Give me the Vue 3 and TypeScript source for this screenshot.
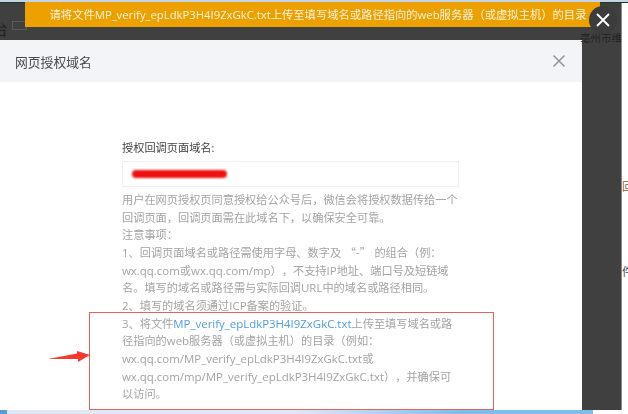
<script setup lang="ts">
const fileName = 'MP_verify_epLdkP3H4I9ZxGkC.txt'
</script>

<template>
  <div class="page">
    <div class="backdrop">
      <section class="modal">
        <header class="modal-head">
          <h2 class="modal-title">网页授权域名</h2>
          <svg class="modal-x" width="14" height="14" viewBox="0 0 14 14">
            <path d="M1.5 1.5 12.5 12.5M12.5 1.5 1.5 12.5" stroke="#8c8c8c" stroke-width="1.4" fill="none" />
          </svg>
        </header>
        <div class="modal-body">
          <div class="label">授权回调页面域名:</div>
          <div class="input"><span class="redact"></span></div>
          <div class="help">
            <div>用户在网页授权页同意授权给公众号后，微信会将授权数据传给一个</div>
            <div>回调页面，回调页面需在此域名下，以确保安全可靠。</div>
            <div>注意事项：</div>
            <div><span class="lat">1</span>、回调页面域名或路径需使用字母、数字及<span class="cjk">“-”</span>的组合（例：</div>
            <div><span class="lat">wx.qq.com</span>或<span class="lat">wx.qq.com/mp</span>），不支持<span class="lat">IP</span>地址、端口号及短链域</div>
            <div>名。填写的域名或路径需与实际回调<span class="lat">URL</span>中的域名或路径相同。</div>
            <div><span class="lat">2</span>、填写的域名须通过<span class="lat">ICP</span>备案的验证。</div>
            <div><span class="lat">3</span>、将文件<span class="lat link">{{ fileName }}</span>上传至填写域名或路</div>
            <div>径指向的<span class="lat">web</span>服务器（或虚拟主机）的目录（例如：</div>
            <div><span class="lat">wx.qq.com/{{ fileName }}</span>或</div>
            <div><span class="lat">wx.qq.com/mp/{{ fileName }}</span>），并确保可</div>
            <div>以访问。</div>
          </div>
        </div>
      </section>
      <div class="strip-text">亳州市维</div>
    </div>

    <div class="taskbar"></div>
    <div class="top-edge"></div>
    <div class="under-text">台</div>
    <div class="under-box"></div>
    <div class="edge-a">回</div>
    <div class="edge-b">件</div>

    <div class="toast">请将文件{{ fileName }}上传至填写域名或路径指向的web服务器（或虚拟主机）的目录</div>
    <button class="toast-close" type="button" aria-label="关闭">
      <svg width="14" height="14" viewBox="0 0 14 14">
        <path d="M1 1 13 13M13 1 1 13" stroke="#fff" stroke-width="1.8" fill="none" />
      </svg>
    </button>

    <div class="mark-box"></div>
    <svg class="mark-arrow" width="46" height="16" viewBox="0 0 46 16">
      <path d="M2 11 31 5.5 31 3 44 7 32 14 32 11Z" fill="#f5392f" />
    </svg>
  </div>
</template>

<style>
html, body { margin: 0; background: #fff; }
</style>

<style scoped>
.page {
  position: relative;
  width: 628px;
  height: 414px;
  overflow: hidden;
  background: #fff;
  font-family: "Open Sans", "Noto Sans CJK SC", sans-serif;
  text-spacing-trim: space-all;
}
.backdrop {
  position: relative;
  width: 622px;
  height: 410px;
  padding-top: 40px;
  box-sizing: border-box;
  background: #404040;
  border-right: 1px solid #8a8a8a;
}
.modal {
  width: 582px;
  height: 370px;
  background: #fff;
  filter: blur(0.35px);
}
.modal-head {
  height: 42px;
  display: flex;
  align-items: center;
  justify-content: space-between;
  padding: 0 16px 0 15px;
  background: #f2f4f8;
}
.modal-title {
  margin: 0;
  font-size: 12.8px;
  font-weight: 400;
  color: #4a4a4a;
}
.modal-x { display: block; }
.modal-body { padding: 56px 0 0 122px; }
.label {
  height: 20px;
  line-height: 20px;
  font-size: 11.2px;
  color: #444;
}
.input {
  width: 337px;
  height: 26px;
  box-sizing: border-box;
  margin-top: 3px;
  padding: 8px 0 0 9px;
  border: 1px solid #efefef;
}
.redact {
  display: block;
  width: 95px;
  height: 8px;
  border-radius: 4px;
  background: #ee1111;
  filter: blur(1px);
}
.help {
  margin-top: 4px;
  font-size: 11.2px;
  line-height: 17.65px;
  color: #a3a3a3;
  white-space: nowrap;
}
.lat { font-size: 11.45px; }
.cjk { font-family: "Noto Sans CJK SC", sans-serif; padding: 0 3.5px; }
.link { color: #4f9fd8; }
.strip-text {
  position: absolute;
  left: 580px;
  top: 32px;
  font-size: 10.5px;
  line-height: 12px;
  color: #222;
  white-space: nowrap;
  overflow: hidden;
  width: 41px;
}
.taskbar {
  position: absolute;
  left: 0;
  bottom: 0;
  width: 593px;
  height: 4px;
  background: linear-gradient(90deg, #5b9bd5 0, #5b9bd5 7px, #dfe8f4 7px, #dfe8f4 50%, #7ebcea 78%, #7ebcea 100%);
}
.top-edge {
  position: absolute;
  left: 0;
  top: 0;
  width: 628px;
  height: 3px;
  background: linear-gradient(180deg, #c5d5e5 0 2px, #1d3a22 2px);
}
.under-text {
  position: absolute;
  left: -8px;
  top: 20px;
  font-size: 16px;
  line-height: 19px;
  color: #222;
}
.under-box {
  position: absolute;
  left: 12px;
  top: 21px;
  width: 13px;
  height: 7px;
  border: 1px solid #5a5a5a;
}
.edge-a, .edge-b {
  position: absolute;
  left: 622px;
  font-size: 11px;
  line-height: 12px;
  color: #8a5a3a;
}
.edge-a { top: 181px; }
.edge-b { top: 266px; color: #445; }
.toast {
  position: absolute;
  left: 25px;
  top: 2px;
  width: 575px;
  height: 25px;
  box-sizing: border-box;
  padding-left: 11px;
  line-height: 25px;
  text-align: center;
  font-size: 11.3px;
  color: #fdf3dc;
  background: #eda100;
  white-space: nowrap;
  filter: blur(0.3px);
}
.toast-close {
  position: absolute;
  left: 589px;
  top: 6px;
  width: 28px;
  height: 28px;
  display: flex;
  align-items: center;
  justify-content: center;
  padding: 0;
  border: 0;
  border-radius: 50%;
  background: #3c3c3c;
}
.mark-box {
  position: absolute;
  left: 89px;
  top: 312px;
  width: 405px;
  height: 98px;
  box-sizing: border-box;
  border: 1px solid #e8605f;
}
.mark-arrow {
  position: absolute;
  left: 46px;
  top: 348px;
}
</style>
